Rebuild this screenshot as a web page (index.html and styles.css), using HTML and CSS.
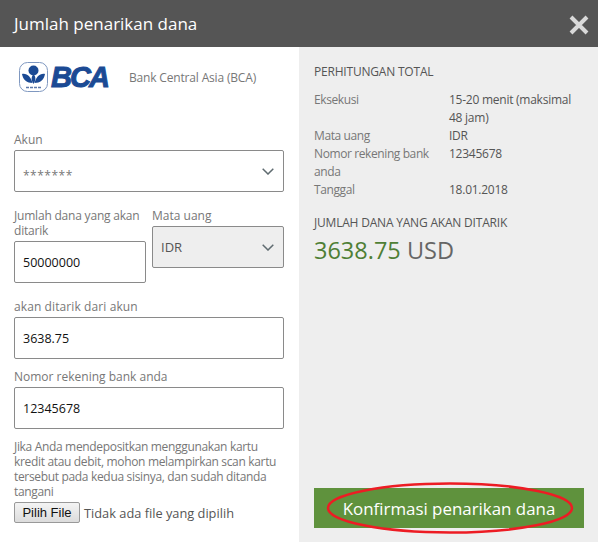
FILE: index.html
```html
<!DOCTYPE html>
<html lang="en">
<head>
    <meta charset="UTF-8">
    <title>Jumlah penarikan dana</title>
    <link rel="stylesheet" href="styles.css">
</head>
<body>
    <div class="modal">
        <div class="modal-header">
            <h1>Jumlah penarikan dana</h1>
            <svg class="close-icon" width="20" height="20" viewBox="0 0 20 20">
                <path d="M2 2 L18 18 M18 2 L2 18" stroke="#d9d9d9" stroke-width="4" fill="none"/>
            </svg>
        </div>
        <div class="modal-body">
            <div class="form-col">
                <div class="bank-row">
                    <div class="bank-logo">
                        <svg width="29" height="30" viewBox="0 0 29 30">
                            <rect x="0.5" y="0.5" width="28" height="29" rx="8" fill="#fff" stroke="#7f98c0" stroke-width="1"/>
                            <circle cx="14.5" cy="8.5" r="5" fill="#1b4a94"/>
                            <path d="M14.5 12 C17 15 17 18 14.5 22 C12 18 12 15 14.5 12 Z" fill="#1b4a94"/>
                            <path d="M3 12 C8 11 12 15 13.5 21 C8 21 4 18 3 12 Z" fill="#1b4a94"/>
                            <path d="M26 12 C21 11 17 15 15.5 21 C21 21 25 18 26 12 Z" fill="#1b4a94"/>
                            <path d="M7 25.5 H22" stroke="#5d7aab" stroke-width="1.5" stroke-dasharray="3 1"/>
                        </svg>
                        <span class="bca-text">BCA</span>
                    </div>
                    <span class="bank-name">Bank Central Asia (BCA)</span>
                </div>

                <label class="field-label">Akun</label>
                <div class="select-box">
                    <span class="masked">*******</span>
                    <svg class="chevron" width="12" height="7" viewBox="0 0 12 7"><path d="M.7.7 6 6 11.3.7" stroke="#5f6b70" stroke-width="1.5" fill="none"/></svg>
                </div>

                <div class="split-row">
                    <div class="split-amount">
                        <label class="field-label">Jumlah dana yang akan ditarik</label>
                        <div class="input-box">50000000</div>
                    </div>
                    <div class="split-currency">
                        <label class="field-label">Mata uang</label>
                        <div class="select-box disabled">
                            <span>IDR</span>
                            <svg class="chevron" width="12" height="7" viewBox="0 0 12 7"><path d="M.7.7 6 6 11.3.7" stroke="#5f6b70" stroke-width="1.5" fill="none"/></svg>
                        </div>
                    </div>
                </div>

                <label class="field-label from-account">akan ditarik dari akun</label>
                <div class="input-box">3638.75</div>

                <label class="field-label account-number">Nomor rekening bank anda</label>
                <div class="input-box">12345678</div>

                <p class="upload-note">Jika Anda mendepositkan menggunakan kartu kredit atau debit, mohon melampirkan scan kartu tersebut pada kedua sisinya, dan sudah ditanda tangani</p>
                <div class="file-row">
                    <button class="file-button">Pilih File</button>
                    <span>Tidak ada file yang dipilih</span>
                </div>
            </div>

            <div class="summary-col">
                <h2>PERHITUNGAN TOTAL</h2>
                <div class="summary-table">
                    <span class="key">Eksekusi</span><span class="val">15-20 menit (maksimal 48 jam)</span>
                    <span class="key">Mata uang</span><span class="val">IDR</span>
                    <span class="key">Nomor rekening bank anda</span><span class="val">12345678</span>
                    <span class="key">Tanggal</span><span class="val">18.01.2018</span>
                </div>
                <h2 class="total-title">JUMLAH DANA YANG AKAN DITARIK</h2>
                <div class="total-value"><span class="amount">3638.75</span> USD</div>
                <div class="confirm-wrap">
                    <button class="confirm-button">Konfirmasi penarikan dana</button>
                    <svg class="red-ring" width="250" height="54" viewBox="0 0 250 54">
                        <ellipse cx="125" cy="27" rx="122" ry="24.5" fill="none" stroke="#ed1c24" stroke-width="2.5"/>
                    </svg>
                </div>
            </div>
        </div>
    </div>
</body>
</html>
```

FILE: styles.css
```css
* {
    box-sizing: border-box;
}

body {
    margin: 0;
    font-family: "Open Sans", "Noto Sans", sans-serif;
    font-size: 12px;
    color: #666;
    background-color: #fff;
}

.modal {
    width: 598px;
    height: 542px;
    display: flex;
    flex-direction: column;
    overflow: hidden;
}

.modal-header {
    height: 47px;
    flex-shrink: 0;
    background-color: #555;
    display: flex;
    justify-content: space-between;
    align-items: center;
    padding: 0 9px 0 14px;
}

.modal-header h1 {
    margin: 0;
    font-size: 17px;
    font-weight: 400;
    color: #fff;
}

.close-icon {
    margin-top: 3px;
}

.modal-body {
    flex: 1;
    display: flex;
}

.form-col {
    width: 299px;
    padding: 0 15px 0 14px;
}

.bank-row {
    display: flex;
    align-items: center;
    height: 30px;
    margin-top: 15px;
    margin-bottom: 40px;
    padding-left: 5px;
}

.bank-logo {
    width: 110px;
    display: flex;
    align-items: center;
    gap: 3px;
}

.bca-text {
    font-family: "Liberation Sans", sans-serif;
    font-size: 29px;
    line-height: 30px;
    font-weight: 700;
    font-style: italic;
    letter-spacing: -2px;
    color: #1b4a94;
    -webkit-text-stroke: 1px #1b4a94;
}

.bank-name {
    color: #777;
    letter-spacing: -0.17px;
}

.field-label {
    display: block;
    line-height: 15px;
    margin-bottom: 3px;
    color: #777;
}

.select-box,
.input-box {
    height: 42px;
    display: flex;
    align-items: center;
    padding: 0 8px;
    background-color: #fff;
    border: 1px solid #8a8a8a;
    border-radius: 2px;
    font-size: 12.5px;
    color: #111;
}

.select-box {
    justify-content: space-between;
}

.select-box.disabled {
    background-color: #eee;
    color: #555;
    font-size: 13px;
}

.masked {
    padding-top: 8px;
    color: #777;
    font-size: 12px;
    letter-spacing: 0.5px;
}

.chevron {
    margin-right: 1px;
}

.split-row {
    display: flex;
    gap: 6px;
    margin-top: 16px;
}

.split-amount {
    width: 132px;
}

.split-amount .field-label {
    margin-bottom: 3px;
    letter-spacing: -0.2px;
}

.split-currency {
    width: 132px;
}

.from-account {
    margin-top: 16px;
    letter-spacing: 0.1px;
}

.account-number {
    margin-top: 10px;
}

.upload-note {
    margin: 10px 0 0;
    font-size: 12px;
    line-height: 15px;
    letter-spacing: -0.33px;
    color: #777;
}

.file-row {
    display: flex;
    align-items: center;
    gap: 4px;
    margin-top: 3px;
    font-size: 12.8px;
    color: #555;
}

.file-button {
    width: 66px;
    height: 21px;
    padding: 0;
    font-family: "Liberation Sans", sans-serif;
    font-size: 13px;
    color: #111;
    background: linear-gradient(#f4f4f4, #dcdcdc);
    border: 1px solid #999;
    border-radius: 2px;
}

.summary-col {
    width: 299px;
    padding: 0 14px 0 15px;
    background-color: #eee;
    display: flex;
    flex-direction: column;
}

.summary-col h2 {
    margin: 0;
    font-size: 12px;
    font-weight: 400;
    line-height: 18px;
    letter-spacing: -0.2px;
    color: #555;
}

.summary-col > h2:first-child {
    margin-top: 16px;
}

.summary-table {
    display: grid;
    grid-template-columns: 135px 1fr;
    margin-top: 10px;
    line-height: 18px;
    letter-spacing: -0.25px;
}

.key {
    padding-right: 10px;
    letter-spacing: -0.4px;
    color: #777;
}

.val {
    color: #555;
}

.total-title.total-title {
    margin-top: 15px;
}

.total-value {
    font-size: 23.5px;
    line-height: 30px;
    margin-top: 3px;
    color: #666;
}

.amount {
    color: #4f7f35;
}

.confirm-wrap {
    position: relative;
    margin-top: auto;
    margin-bottom: 14px;
}

.confirm-button {
    display: block;
    width: 100%;
    height: 40px;
    border: none;
    background-color: #5f923d;
    color: #fff;
    font-family: inherit;
    font-size: 16.9px;
}

.red-ring {
    position: absolute;
    left: 11px;
    top: -7px;
}
```
